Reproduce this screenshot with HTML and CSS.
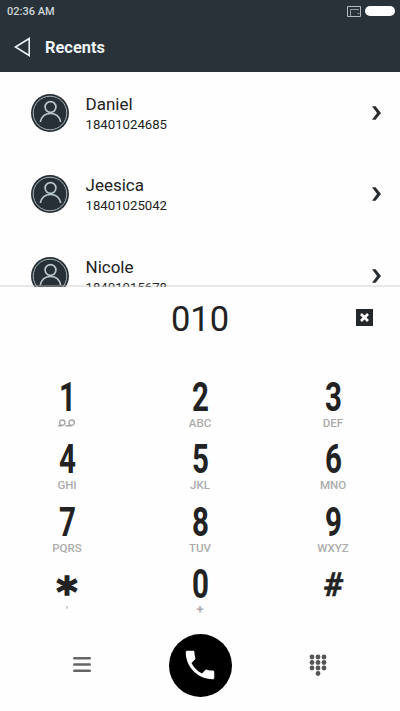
FILE: index.html
```html
<!DOCTYPE html>
<html lang="en">
<head>
<meta charset="utf-8">
<title>Recents</title>
<link rel="stylesheet" href="styles.css">
</head>
<body>
<svg width="0" height="0" class="defs" aria-hidden="true">
  <symbol id="person" viewBox="0 0 38 38">
    <circle cx="19" cy="19" r="19" fill="#263036"/>
    <circle cx="19" cy="19" r="16.8" fill="none" stroke="#a9b4b8" stroke-width="1"/>
    <g fill="none" stroke="#b9c6cc" stroke-width="1.7"><circle cx="19.5" cy="13" r="5.4"/><path d="M9.3 28c1.2-5.5 5-8.5 10.2-8.5s9 3 10.2 8.5"/></g>
  </symbol>
  <symbol id="chevron" viewBox="0 0 10 14"><path d="M0 .3h3.6L9 7l-5.400 6.700H0L5 7z" fill="#2a2d30"/></symbol>
</svg>
<main class="phone">
  <header class="header">
    <div class="status">
      <span class="time">02:36 AM</span>
      <svg class="cast" width="14" height="11" viewBox="0 0 14 11" fill="none" stroke="#b3bbbe"><path d="M.5.5h13v10H.5z"/><path d="M3.500 10V3.500H12M10.500 7.500h2" stroke="#8f999d"/></svg>
      <span class="battery"></span>
    </div>
    <div class="title-bar">
      <svg width="17" height="20" viewBox="0 0 17 20"><path d="M1.500 10 15.200 1.500v17z" fill="none" stroke="#e9f1f4" stroke-width="1.600"/></svg>
      <h1>Recents</h1>
    </div>
  </header>
  <section class="recents">
    <div class="contact"><svg class="avatar"><use href="#person"/></svg><div class="info"><div class="name">Daniel</div><div class="number">18401024685</div></div><svg class="chevron"><use href="#chevron"/></svg></div>
    <div class="contact"><svg class="avatar"><use href="#person"/></svg><div class="info"><div class="name">Jeesica</div><div class="number">18401025042</div></div><svg class="chevron"><use href="#chevron"/></svg></div>
    <div class="contact"><svg class="avatar"><use href="#person"/></svg><div class="info"><div class="name">Nicole</div><div class="number">18401015678</div></div><svg class="chevron"><use href="#chevron"/></svg></div>
  </section>
  <section class="dialer">
    <div class="entry">
      <span></span><span class="dialed">010</span>
      <svg class="delete" width="17" height="17" viewBox="0 0 17 17"><path fill="#25282a" d="M0 0h17v17H0z"/><path d="m5 5 7 7m0-7-7 7" stroke="#fff" stroke-width="2.800"/></svg>
    </div>
    <div class="keypad">
      <div class="key"><b>1</b><span><svg width="18" height="8" viewBox="0 0 18 8" fill="none" stroke="#a5a5a5" stroke-width="1.4"><circle cx="4.300" cy="3.700" r="2.700"/><circle cx="13.700" cy="3.700" r="2.700"/><path d="M0 6.700h4.300M7.500 6.700h6.200"/></svg></span></div>
      <div class="key"><b>2</b><span>ABC</span></div>
      <div class="key"><b>3</b><span>DEF</span></div>
      <div class="key"><b>4</b><span>GHI</span></div>
      <div class="key"><b>5</b><span>JKL</span></div>
      <div class="key"><b>6</b><span>MNO</span></div>
      <div class="key"><b>7</b><span>PQRS</span></div>
      <div class="key"><b>8</b><span>TUV</span></div>
      <div class="key"><b>9</b><span>WXYZ</span></div>
      <div class="key"><b class="star">*</b><span>'</span></div>
      <div class="key"><b>0</b><span class="plus">+</span></div>
      <div class="key"><b class="hash">#</b><span></span></div>
    </div>
    <div class="actions">
      <svg class="menu" width="18" height="17" viewBox="0 0 18 17"><path d="M1.200 2.200h15.600M1.200 8.500h15.600M1.200 14.800h15.600" stroke="#666" stroke-width="2.400" stroke-linecap="round"/></svg>
      <div class="call"><svg width="38" height="38" viewBox="0 0 24 24"><path fill="#fff" d="M6.620 10.790c1.440 2.830 3.760 5.140 6.590 6.590l2.200-2.200c.27-.27.670-.36 1.020-.24 1.120.37 2.330.57 3.570.57.550 0 1 .45 1 1V20c0 .55-.45 1-1 1C10.610 21 3 13.390 3 4c0-.55.450-1 1-1h3.500c.55 0 1 .45 1 1 0 1.250.2 2.450.57 3.570.11.350.030.740-.25 1.020z"/></svg></div>
      <svg class="dots" width="18" height="22" viewBox="0 0 18 22" fill="#555"><circle cx="3" cy="3" r="2.400"/><circle cx="9" cy="3" r="2.400"/><circle cx="15" cy="3" r="2.400"/><circle cx="3" cy="8.500" r="2.400"/><circle cx="9" cy="8.500" r="2.400"/><circle cx="15" cy="8.500" r="2.400"/><circle cx="3" cy="14" r="2.400"/><circle cx="9" cy="14" r="2.400"/><circle cx="15" cy="14" r="2.400"/><circle cx="9" cy="19.500" r="2.400"/></svg>
    </div>
  </section>
</main>
</body>
</html>
```
FILE: styles.css
```css
* { box-sizing: border-box; }
body { margin: 0; background: #fefefe; color: #222; font-family: Roboto, sans-serif; }
svg { display: block; flex: none; }
.defs { display: none; }
.phone { width: 400px; height: 711px; overflow: hidden; display: flex; flex-direction: column; }
.header { height: 72px; flex: none; background: #283238; }
.status { height: 22px; display: flex; align-items: center; padding: 0 5px 0 7px; }
.time { flex: 1; font-size: 11px; font-weight: 500; color: #d0d6d8; }
.cast { margin-right: 4px; }
.battery { width: 30px; height: 10px; border-radius: 5px; background: #fff; }
.title-bar { height: 50px; display: flex; align-items: center; gap: 14px; padding-left: 14px; }
h1 { margin: 2px 0 0; font-size: 16.4px; line-height: 20px; font-weight: 700; color: #eef3f5; }
.title-bar svg { margin-top: -1px; }
.recents { position: relative; height: 215px; flex: none; overflow: hidden; }
.recents::after { content: ""; position: absolute; left: 0; right: 0; bottom: 0; height: 2.5px; background: rgba(200, 200, 200, .4); }
.contact { height: 81.5px; display: flex; align-items: center; padding: 0 18.5px 0 31px; }
.avatar { width: 38px; height: 38px; }
.info { flex: 1; margin: 3px 0 0 16.5px; }
.name { font-size: 17px; line-height: 20px; }
.number { font-size: 13.2px; line-height: 21px; }
.chevron { width: 10px; height: 14px; }
.dialer { flex: 1; }
.entry { height: 85px; display: grid; grid-template-columns: 1fr auto 1fr; padding: 10px 27px 0; }
.dialed { font-size: 34.5px; line-height: 44px; }
.delete { justify-self: end; margin-top: 12px; }
.keypad { display: grid; grid-template-columns: repeat(3, 133px); grid-auto-rows: 62.3px; justify-content: center; }
.key { text-align: center; padding-top: 8px; }
.key b { display: block; height: 34px; font-size: 41px; line-height: 35.5px; font-weight: 700; transform: scaleX(.72); }
.key span { display: flex; height: 18px; align-items: center; justify-content: center; font-size: 11.5px; font-weight: 500; line-height: 18px; color: #acacac; }
.key .plus { font-weight: 700; font-size: 13px; }
.key .star { font-family: "DejaVu Sans", sans-serif; font-size: 40px; line-height: 50px; transform: none; -webkit-text-stroke: 1.5px #222; }
.key .hash { font-size: 33px; line-height: 36px; transform: skewX(-5deg); -webkit-text-stroke: .5px #222; }
.actions { height: 88px; display: flex; align-items: center; padding: 0 73px; justify-content: space-between; }
.menu, .dots { margin-top: -1px; }
.call { width: 63px; height: 63px; border-radius: 50%; background: #000; display: grid; place-items: center; }
```
